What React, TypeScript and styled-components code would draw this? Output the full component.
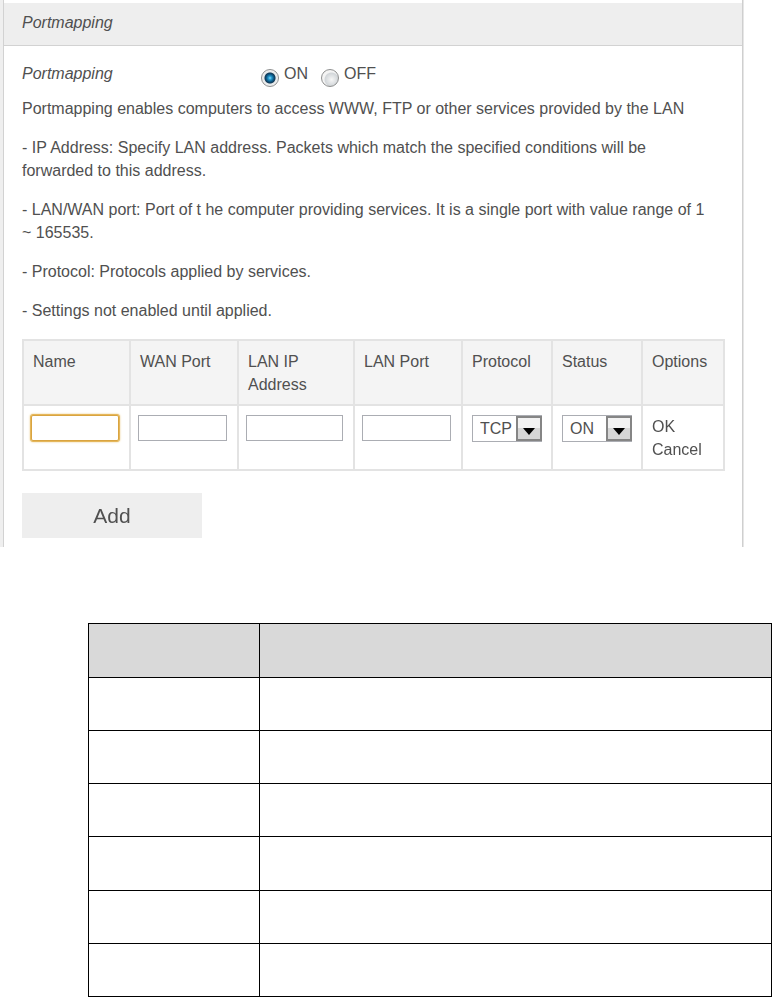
import React, { useState } from "react";
import styled, { createGlobalStyle, css } from "styled-components";

const GlobalStyle = createGlobalStyle`
  *, *::before, *::after { box-sizing: border-box; }
  body {
    margin: 0;
    background: #fff;
    color: #505050;
    font: 16px/23px "Liberation Sans", Arial, sans-serif;
  }
  button, input, select { font: inherit; color: inherit; }
`;

const Page = styled.main`
  display: flow-root;
`;

const Panel = styled.section`
  margin-right: 28px;
  border-left: 3px solid #efefef;
  border-right: 1px solid #e6e6e6;
`;

const PanelInner = styled.div`
  padding-top: 3px;
  border-left: 1px solid #d2d2d2;
  border-right: 1px solid #cfcfcf;
`;

const PanelTitle = styled.h2`
  margin: 0;
  padding: 8px 18px 11px;
  border-bottom: 1px solid #d2d2d2;
  background: #eee;
  font-size: 16px;
  font-style: italic;
  font-weight: 400;
`;

const PanelBody = styled.div`
  padding: 16px 19px 9px 18px;
`;

const ToggleRow = styled.fieldset`
  display: flex;
  margin: 0;
  padding: 0;
  border: 0;
`;

const ToggleLabel = styled.span`
  width: 239px;
  font-style: italic;
`;

const RadioLabel = styled.label`
  display: flex;
  align-items: flex-start;
  gap: 5px;
  margin-right: 13px;
`;

const Radio = styled.input`
  appearance: none;
  width: 18px;
  height: 18px;
  margin: 7px 0 0;
  border: 1px solid #8e8f8f;
  border-radius: 50%;
  background: radial-gradient(circle at 60% 60%, #f6f6f6 0, #d2d6d9 48%, #f4f4f4 56%);
  &:checked {
    background: radial-gradient(circle 12px at 50% 50%, #8fdcf8 0, #249bd0 14%, #0c537f 32%, #123a57 42%, #e4e7e8 50%, #f4f4f4 70%);
  }
`;

const Notes = styled.div`
  display: flex;
  flex-direction: column;
  gap: 16px;
  margin-top: 10px;
`;

const Note = styled.p`
  margin: 0;
`;

const RuleTable = styled.table`
  width: 100%;
  margin-top: 17px;
  border-collapse: collapse;
  table-layout: fixed;
`;

const RuleCol = styled.col<{ $w: number }>`
  width: ${(p) => p.$w}px;
`;

const cell = css`
  height: 65px;
  padding: 9px 9px 8px;
  border: 2px solid #e3e3e3;
  text-align: left;
  vertical-align: top;
  font-weight: 400;
`;

const HeadCell = styled.th`
  ${cell}
  background: #f4f4f4;
`;

const Cell = styled.td<{ $field?: boolean }>`
  ${cell}
  ${(p) => p.$field && "padding: 9px 10px 8px 7px;"}
`;

const Field = styled.input`
  display: block;
  width: 100%;
  height: 26px;
  padding: 0 2px;
  border: 1px solid #abadb3;
  background: #fff;
  &:focus {
    border-color: #d9a441;
    border-radius: 2px;
    outline: 1px solid #e5b75b;
    box-shadow: 0 0 2px 1px #e8c67e;
    caret-color: #000;
  }
`;

const SelectBox = styled.div`
  display: grid;
  grid-template-columns: 1fr 26px;
  height: 27px;
`;

const Select = styled.select`
  grid-area: 1 / 1 / 2 / 3;
  appearance: none;
  width: 100%;
  padding: 0 26px 0 7px;
  border: 1px solid #abadb3;
  border-radius: 0;
  background: #fff;
`;

const Arrow = styled.svg`
  grid-area: 1 / 2 / 2 / 3;
  display: block;
  pointer-events: none;
`;

const ActionLink = styled.a`
  display: block;
  color: inherit;
  text-decoration: none;
`;

const AddButton = styled.button`
  display: block;
  width: 180px;
  height: 45px;
  margin-top: 22px;
  padding: 0;
  border: 0;
  background: #eee;
  font-size: 21px;
`;

const ParameterTable = styled.table`
  width: calc(100% - 88px);
  height: 374px;
  margin: 76px 0 0 88px;
  border-collapse: collapse;
  table-layout: fixed;
`;

const ParameterCell = styled.td<{ $head?: boolean; $narrow?: boolean }>`
  width: ${(p) => (p.$narrow ? "171px" : "auto")};
  height: ${(p) => (p.$head ? 54 : 53)}px;
  padding: 0;
  border: 1px solid #000;
  background: ${(p) => (p.$head ? "#d9d9d9" : "#fff")};
`;

const columns = [
  { name: "Name", width: 107 },
  { name: "WAN Port", width: 108 },
  { name: "LAN IP Address", width: 116 },
  { name: "LAN Port", width: 108 },
  { name: "Protocol", width: 90 },
  { name: "Status", width: 90 },
  { name: "Options", width: 82 },
];

function DropDown({ label, options }: { label: string; options: string[] }) {
  return (
    <SelectBox>
      <Select aria-label={label}>
        {options.map((o) => (
          <option key={o}>{o}</option>
        ))}
      </Select>
      <Arrow width="26" height="27" viewBox="0 0 26 27" aria-hidden="true">
        <rect x="1" y="2" width="24" height="23" fill="#f2f2f2" stroke="#858585" strokeWidth="2" />
        <rect x="2" y="13" width="22" height="11" fill="#d6d6d6" />
        <path d="M7 13h12l-6 7z" fill="#000" />
      </Arrow>
    </SelectBox>
  );
}

export default function App() {
  const [enabled, setEnabled] = useState(true);

  return (
    <Page>
      <GlobalStyle />
      <Panel>
        <PanelInner>
          <PanelTitle>Portmapping</PanelTitle>
          <PanelBody>
            <ToggleRow aria-labelledby="portmapping-label">
              <ToggleLabel id="portmapping-label">Portmapping</ToggleLabel>
              <RadioLabel>
                <Radio type="radio" name="portmapping" checked={enabled} onChange={() => setEnabled(true)} />
                ON
              </RadioLabel>
              <RadioLabel>
                <Radio type="radio" name="portmapping" checked={!enabled} onChange={() => setEnabled(false)} />
                OFF
              </RadioLabel>
            </ToggleRow>
            <Notes>
              <Note>Portmapping enables computers to access WWW, FTP or other services provided by the LAN</Note>
              <Note>
                - IP Address: Specify LAN address. Packets which match the specified conditions will be
                <br />
                forwarded to this address.
              </Note>
              <Note>
                - LAN/WAN port: Port of t he computer providing services. It is a single port with value range of 1
                <br />~ 165535.
              </Note>
              <Note>- Protocol: Protocols applied by services.</Note>
              <Note>- Settings not enabled until applied.</Note>
            </Notes>
            <RuleTable>
              <colgroup>
                {columns.map((c) => (
                  <RuleCol key={c.name} $w={c.width} />
                ))}
              </colgroup>
              <thead>
                <tr>
                  {columns.map((c) => (
                    <HeadCell key={c.name} scope="col">
                      {c.name}
                    </HeadCell>
                  ))}
                </tr>
              </thead>
              <tbody>
                <tr>
                  {columns.slice(0, 4).map((c, i) => (
                    <Cell key={c.name} $field>
                      <Field type="text" aria-label={c.name} autoFocus={i === 0} />
                    </Cell>
                  ))}
                  <Cell>
                    <DropDown label="Protocol" options={["TCP", "UDP"]} />
                  </Cell>
                  <Cell>
                    <DropDown label="Status" options={["ON", "OFF"]} />
                  </Cell>
                  <Cell>
                    <ActionLink href="#ok">OK</ActionLink>
                    <ActionLink href="#cancel">Cancel</ActionLink>
                  </Cell>
                </tr>
              </tbody>
            </RuleTable>
            <AddButton type="button">Add</AddButton>
          </PanelBody>
        </PanelInner>
      </Panel>
      <ParameterTable>
        <thead>
          <tr>
            <ParameterCell $head $narrow />
            <ParameterCell $head />
          </tr>
        </thead>
        <tbody>
          {Array.from({ length: 6 }, (_, i) => (
            <tr key={i}>
              <ParameterCell $narrow />
              <ParameterCell />
            </tr>
          ))}
        </tbody>
      </ParameterTable>
    </Page>
  );
}
